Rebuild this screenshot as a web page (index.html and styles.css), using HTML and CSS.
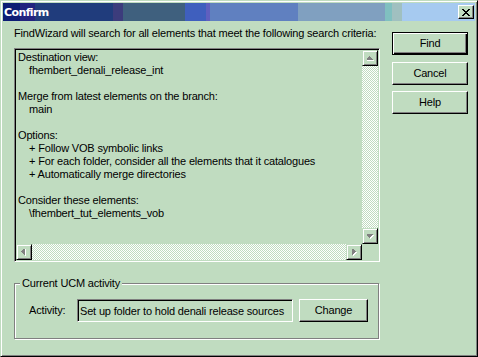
FILE: index.html
```html
<!DOCTYPE html>
<html lang="en">
<head>
  <meta charset="UTF-8">
  <title>Confirm</title>
  <link rel="stylesheet" href="styles.css">
</head>
<body>

  <div class="window">
    <div class="titlebar">
      <span class="title">Confirm</span>
      <button class="close-btn" type="button">
        <svg width="8" height="7" viewBox="0 0 8 7" shape-rendering="crispEdges"><path d="M0 0h2v1H0zM6 0h2v1H6zM1 1h2v1H1zM5 1h2v1H5zM2 2h4v1H2zM3 3h2v1H3zM2 4h4v1H2zM1 5h2v1H1zM5 5h2v1H5zM0 6h2v1H0zM6 6h2v1H6z" fill="#000"/></svg>
      </button>
    </div>

    <div class="dialog">
      <div class="main">
        <p class="intro">FindWizard will search for all elements that meet the following search criteria:</p>

        <div class="listbox">
          <div class="list-area">
            <div class="list-text">
              <div>Destination view:</div>
              <div class="indent">fhembert_denali_release_int</div>
              <div class="gap"></div>
              <div>Merge from latest elements on the branch:</div>
              <div class="indent">main</div>
              <div class="gap"></div>
              <div>Options:</div>
              <div class="indent">+ Follow VOB symbolic links</div>
              <div class="indent">+ For each folder, consider all the elements that it catalogues</div>
              <div class="indent">+ Automatically merge directories</div>
              <div class="gap"></div>
              <div>Consider these elements:</div>
              <div class="indent">\fhembert_tut_elements_vob</div>
            </div>
            <div class="vscroll">
              <span class="arrow">
                <svg width="16" height="16" viewBox="0 0 16 16" shape-rendering="crispEdges"><path d="M8 7h1v1h1v1h1v1h1v1H5v-1h1V9h1V8h1z" fill="#fff"/><path d="M7 6h1v1h1v1h1v1h1v1H4V9h1V8h1V7h1z" fill="#808080"/></svg>
              </span>
              <span class="track"></span>
              <span class="arrow">
                <svg width="16" height="16" viewBox="0 0 16 16" shape-rendering="crispEdges"><path d="M5 7h7v1h-1v1h-1v1H9v1H8v-1H7V9H6V8H5z" fill="#fff"/><path d="M4 6h7v1h-1v1H9v1H8v1H7V9H6V8H5V7H4z" fill="#808080"/></svg>
              </span>
            </div>
          </div>
          <div class="hscroll-row">
            <div class="hscroll">
              <span class="arrow">
                <svg width="16" height="16" viewBox="0 0 16 16" shape-rendering="crispEdges"><path d="M6 8h1V7h1V6h1V5h1v7H9v-1H8v-1H7V9H6z" fill="#fff"/><path d="M5 7h1V6h1V5h1V4h1v7H8v-1H7V9H6V8H5z" fill="#808080"/></svg>
              </span>
              <span class="track"></span>
              <span class="arrow">
                <svg width="16" height="16" viewBox="0 0 16 16" shape-rendering="crispEdges"><path d="M7 5h1v1h1v1h1v1h1v1h-1v1H9v1H8v1H7z" fill="#fff"/><path d="M6 4h1v1h1v1h1v1h1v1H9v1H8v1H7v1H6z" fill="#808080"/></svg>
              </span>
            </div>
            <div class="corner"></div>
          </div>
        </div>

        <fieldset class="group">
          <legend>Current UCM activity</legend>
          <div class="activity-row">
            <label class="activity-label" for="activity">Activity:</label>
            <input id="activity" class="activity-field" type="text" value="Set up folder to hold denali release sources" readonly>
            <button class="btn change-btn" type="button">Change</button>
          </div>
        </fieldset>
      </div>

      <div class="side">
        <button class="btn default-btn" type="button">Find</button>
        <button class="btn cancel-btn" type="button">Cancel</button>
        <button class="btn help-btn" type="button">Help</button>
      </div>
    </div>
  </div>

</body>
</html>
```

FILE: styles.css
```css
body {
  margin: 0;
  background-color: #c0dcc0;
  color: #000;
  font-family: "Liberation Sans", Arial, sans-serif;
  font-size: 11px;
  line-height: 13px;
  letter-spacing: -0.17px;
}

.window {
  width: 478px;
  height: 357px;
  box-sizing: border-box;
  border: 1px solid;
  border-color: #c0dcc0 #000 #000 #c0dcc0;
  box-shadow: inset 1px 1px #fff, inset -1px -1px #808080;
  padding: 2px;
  display: flex;
  flex-direction: column;
}

/* title bar with the banded gradient */
.titlebar {
  height: 18px;
  display: flex;
  align-items: center;
  justify-content: space-between;
  padding-left: 1px;
  background: linear-gradient(to right,
    #0c1d74 0 17px,
    #23237f 17px 32px,
    #203c7c 32px 110px,
    #3c3c7c 110px 120px,
    #3f607e 120px 182px,
    #3f5fbe 182px 203px,
    #5f5fbf 203px 207px,
    #6080c0 207px 295px,
    #80a0c0 295px 382px,
    #80c0c0 382px 389px,
    #a0c0c0 389px 399px,
    #a6caf0 399px);
}

.title {
  color: #fff;
  font-family: "DejaVu Sans", Verdana, sans-serif;
  font-weight: bold;
  font-size: 11px;
  letter-spacing: -0.6px;
}

.close-btn {
  width: 16px;
  height: 14px;
  margin-right: 1px;
  padding: 0;
  display: flex;
  align-items: center;
  justify-content: center;
  background-color: #c0dcc0;
  border: 1px solid;
  border-color: #fff #000 #000 #fff;
  box-shadow: inset -1px -1px #808080;
}

.dialog {
  flex: 1;
  display: flex;
  padding-left: 11px;
}

.main {
  width: 366px;
}

.intro {
  margin: 6px 0 8px;
  white-space: nowrap;
}

/* sunken list with scroll bars */
.listbox {
  height: 214px;
  box-sizing: border-box;
  border: 1px solid;
  border-color: #808080 #fff #fff #808080;
  box-shadow: inset 1px 1px #000, inset -1px -1px #c0dcc0;
  padding: 1px;
}

.list-area {
  height: 194px;
  display: flex;
}

.list-text {
  flex: 1;
  padding: 1px 0 0 2px;
  white-space: nowrap;
  overflow: hidden;
}

.list-text .indent {
  padding-left: 11px;
}

.list-text .gap {
  height: 13px;
}

.vscroll {
  width: 16px;
  display: flex;
  flex-direction: column;
}

.hscroll-row {
  height: 16px;
  display: flex;
}

.hscroll {
  flex: 1;
  display: flex;
}

.corner {
  width: 16px;
}

.arrow {
  width: 16px;
  height: 16px;
  box-sizing: border-box;
  border: 1px solid;
  border-color: #c0dcc0 #000 #000 #c0dcc0;
  box-shadow: inset 1px 1px #fff, inset -1px -1px #808080;
  display: flex;
  align-items: center;
  justify-content: center;
  flex-shrink: 0;
}

.arrow svg {
  display: block;
}

.track {
  flex: 1;
  background: repeating-conic-gradient(#fff 0 25%, #c0dcc0 0 50%) 0 0 / 2px 2px;
}

/* group box */
.group {
  margin: 15px 0 0;
  padding: 9px 0 16px;
  width: 365px;
  box-sizing: border-box;
  min-width: 0;
  border: 1px solid #808080;
  box-shadow: 1px 1px #fff, inset 1px 1px #fff;
}

.group legend {
  margin-left: 5px;
  padding: 0 2px;
  background-color: #c0dcc0;
}

.activity-row {
  display: flex;
  align-items: center;
  margin-left: 14px;
}

.activity-label {
  width: 48px;
}

.activity-field {
  width: 216px;
  height: 23px;
  box-sizing: border-box;
  margin: 0 6px 0 0;
  padding: 0 2px;
  font: inherit;
  letter-spacing: inherit;
  color: #000;
  background-color: #c0dcc0;
  border: 1px solid;
  border-color: #808080 #fff #fff #808080;
  box-shadow: inset 1px 1px #000, inset -1px -1px #c0dcc0;
  outline: none;
}

/* push buttons */
.btn {
  height: 23px;
  padding: 0;
  font: inherit;
  letter-spacing: inherit;
  color: #000;
  background-color: #c0dcc0;
  border: 1px solid;
  border-color: #fff #000 #000 #fff;
  box-shadow: inset -1px -1px #808080;
}

.change-btn {
  width: 69px;
}

.side {
  display: flex;
  flex-direction: column;
  margin-left: 12px;
}

.side .btn {
  width: 76px;
}

.default-btn {
  margin-top: 11px;
  border-color: #000;
  box-shadow: inset 1px 1px #fff, inset -1px -1px #000, inset -2px -2px #808080;
}

.cancel-btn {
  margin-top: 7px;
}

.help-btn {
  margin-top: 6px;
}
```
